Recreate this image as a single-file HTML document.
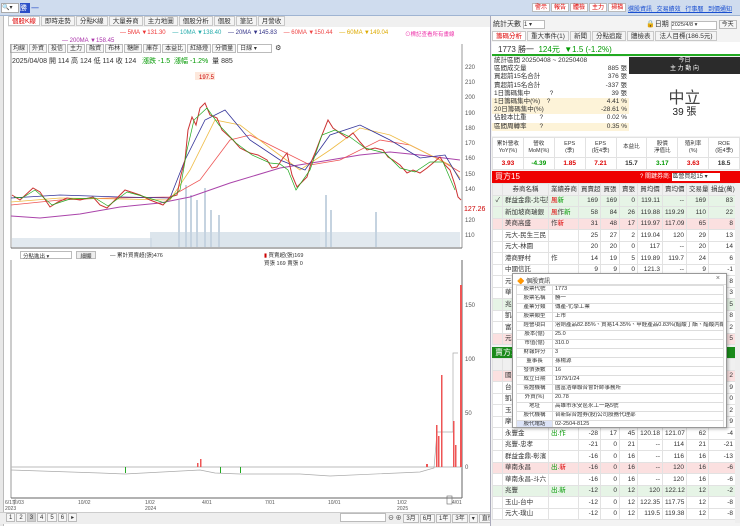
<!DOCTYPE html>
<html><head><meta charset="utf-8">
<style>
*{margin:0;padding:0;box-sizing:border-box}
body{width:740px;height:526px;overflow:hidden;background:#fff;font-family:"Liberation Sans","Noto Sans CJK TC",sans-serif;font-size:7px;color:#333;position:relative}
.a{position:absolute}
.tab{display:inline-block;border:1px solid #c8c8c8;background:#f4f4f4;padding:0 3px;height:10px;line-height:9px;margin-right:1px;font-size:6.5px}
.btn{display:inline-block;border:1px solid #bbb;background:#f6f6f6;padding:0 2px;height:9px;line-height:8px;font-size:6px;margin-right:1px}
table{border-collapse:collapse;width:100%;table-layout:fixed}
td{border:1px solid #e2e2e2;height:11.5px;line-height:9px;font-size:6.5px;padding:0 2px;text-align:right;white-space:nowrap;overflow:hidden}
td.l{text-align:left}
.r{color:#d00}.g{color:#090}
.pop td{height:9px;line-height:7.5px;font-size:5.5px;border:1px solid #ddd;text-align:left;padding:0 2px}
</style></head><body>
<div class="a" style="left:0;top:0;width:740px;height:16px;background:#cfdcee;border-bottom:1px solid #9fb4d2"></div>
<div class="a" style="left:1px;top:3px;width:18px;height:10px;background:#fff;border:1px solid #aaa;font-size:6px">🔍▾</div>
<div class="a" style="left:20px;top:3px;width:10px;height:10px;background:#2a4fc8;color:#fff;font-size:7px">勝</div>
<div class="a" style="left:31px;top:3px;font-size:8px;color:#2a4fc8">一</div>
<div class="a" style="left:532px;top:3px;font-size:6px">
<span class="btn r" style="background:#fff">警示</span><span class="btn r" style="background:#fff">報告</span><span class="btn r" style="background:#fff">體檢</span><span class="btn r" style="background:#fff">主力</span><span class="btn r" style="background:#fff">掃描</span></div>
<div class="a" style="left:628px;top:4px;font-size:6px;color:#1a4fd0;text-decoration:underline;word-spacing:3px">選股資訊 交易績效 行事曆 到價通知</div>
<div class="a" style="left:0;top:16px;width:4px;height:510px;background:#e8e8e8;border-right:1px solid #bbb"></div>
<div class="a" style="left:8px;top:16px;width:482px;height:11px;background:#f0f0f0">
<span class="tab r" style="background:#fff">個股K線</span><span class="tab">即時走勢</span><span class="tab">分點K線</span><span class="tab">大量券商</span><span class="tab">主力地圖</span><span class="tab">個股分析</span><span class="tab">個股</span><span class="tab">筆記</span><span class="tab">月營收</span></div>
<div class="a" style="left:120px;top:30px;font-size:6px;white-space:nowrap"><span style="color:#e33">— 5MA ▼131.30</span>&nbsp;&nbsp;&nbsp;&nbsp;<span style="color:#2aa">— 10MA ▼138.40</span>&nbsp;&nbsp;&nbsp;&nbsp;<span style="color:#338">— 20MA ▼145.83</span>&nbsp;&nbsp;&nbsp;&nbsp;<span style="color:#e44">— 60MA ▼150.44</span>&nbsp;&nbsp;&nbsp;&nbsp;<span style="color:#da0">— 60MA ▼149.04</span></div>
<div class="a" style="left:62px;top:38px;font-size:6px;color:#a3a"> — 200MA ▼158.45</div>
<div class="a" style="left:405px;top:30px;font-size:5.5px;color:#e3a">⊙標記查看所有畫線</div>
<div class="a" style="left:10px;top:44px;width:460px;height:10px">
<span class="btn">均線</span><span class="btn">外資</span><span class="btn">投信</span><span class="btn">主力</span><span class="btn">融資</span><span class="btn">布林</span><span class="btn">糖餅</span><span class="btn">庫存</span><span class="btn">本益比</span><span class="btn">紅綠燈</span><span class="btn">分價量</span><span class="btn" style="width:35px;background:#fff">日線 ▾</span> ⚙</div>
<div class="a" style="left:12px;top:56px;font-size:7px;white-space:nowrap">2025/04/08 開 114 高 124 低 114 收 124 &nbsp; <span class="g">漲跌 -1.5 &nbsp;漲幅 -1.2%</span> &nbsp;量 885</div>
<svg class="a" style="left:0;top:44px" width="490" height="205" viewBox="0 44 490 205">
<line x1="11" y1="44" x2="11" y2="248" stroke="#999"/>
<line x1="462" y1="44" x2="462" y2="248" stroke="#999"/>
<g font-size="6" fill="#555">
<text x="465" y="69">220</text><text x="465" y="84">210</text><text x="465" y="99">200</text><text x="465" y="115">190</text><text x="465" y="130">180</text><text x="465" y="145">170</text><text x="465" y="160">160</text><text x="465" y="176">150</text><text x="465" y="191">140</text><text x="465" y="222">120</text><text x="465" y="237">110</text></g>
<text x="464" y="211" font-size="7" fill="#c00">127.26</text>
<rect x="195" y="72" width="20" height="8" fill="#fde8dc"/><text x="199" y="79" font-size="6" fill="#c00">197.5</text>
<g fill="#c5d3e0">
<rect x="178" y="200" width="2" height="47"/><rect x="185" y="185" width="2" height="62"/><rect x="190" y="195" width="2" height="52"/><rect x="196" y="200" width="2" height="47"/><rect x="204" y="188" width="2" height="59"/><rect x="210" y="210" width="2" height="37"/><rect x="218" y="215" width="2" height="32"/><rect x="325" y="195" width="2" height="52"/><rect x="330" y="210" width="2" height="37"/><rect x="375" y="212" width="2" height="35"/>
<rect x="150" y="232" width="170" height="15" opacity=".6"/><rect x="320" y="232" width="140" height="15" opacity=".5"/><rect x="12" y="238" width="140" height="9" opacity=".5"/></g>
<path fill="none" stroke="#a4a" stroke-width="1" d="M11 216L40 218L80 214L120 207L160 203L190 197L230 183L280 168L330 160L360 155L390 152L420 155L460 160"/>
<path fill="none" stroke="#e55" stroke-width=".8" d="M11 205L60 200L110 198L170 197L200 180L230 140L250 135L280 150L310 165L340 160L380 140L410 145L440 160L460 172"/>
<path fill="none" stroke="#eb4" stroke-width=".8" d="M11 202L60 198L120 199L170 200L190 170L215 120L240 125L270 148L300 170L330 150L360 128L390 135L420 150L450 165L460 178"/>
<path fill="none" stroke="#339" stroke-width=".8" d="M11 198L60 195L120 197L170 198L185 160L205 120L225 110L250 140L280 160L305 170L330 135L360 125L390 140L420 158L445 155L460 180"/>
<path fill="none" stroke="#c33" stroke-width="1" d="M12 195L20 200L33 188L40 192L50 207L58 202L67 198L80 200L93 197L100 205L107 208L115 200L125 190L140 195L150 200L163 205L170 197L177 195L181 175L185 160L188 130L192 117L196 125L200 108L205 103L210 115L217 118L222 130L233 140L240 148L250 153L258 155L267 160L272 168L277 167L283 158L287 153L292 175L297 187L302 182L307 177L312 160L315 153L320 140L328 120L333 128L340 133L347 138L353 133L360 142L367 150L375 148L383 150L388 157L393 160L400 165L407 173L413 170L420 173L427 168L433 163L440 157L445 165L450 170L455 185L458 197L461 200"/>
<path fill="none" stroke="#2a2" stroke-width=".7" d="M14 197L22 198L35 190L52 205L70 199L95 198L108 206L127 192L142 196L165 203L180 190L187 150L194 120L207 108L219 125L236 143L252 155L270 163L280 164L288 170L296 190L310 170L322 135L335 130L350 137L365 148L385 153L400 168L415 172L430 162L443 162L455 190"/>
<line x1="11" y1="248" x2="462" y2="248" stroke="#666"/>
</svg>
<div class="a" style="left:20px;top:251px;width:52px;height:8px;border:1px solid #bbb;font-size:5.5px;padding-left:2px">分點進出 ▾</div>
<div class="a" style="left:76px;top:251px;width:20px;height:8px;border:1px solid #bbb;background:#eee;font-size:5.5px;text-align:center">細顯</div>
<div class="a" style="left:110px;top:251px;font-size:5.5px">— 累計買賣超(張)476</div>
<div class="a" style="left:264px;top:251px;font-size:5.5px"><span style="color:#c00">▮</span> 買賣超(張)169<br>買張 169 賣張 0</div>
<svg class="a" style="left:0;top:260px" width="490" height="250" viewBox="0 260 490 250">
<line x1="11" y1="260" x2="11" y2="498" stroke="#999"/>
<line x1="462" y1="260" x2="462" y2="498" stroke="#666"/>
<line x1="11" y1="498" x2="462" y2="498" stroke="#666"/>
<line x1="11" y1="467" x2="462" y2="467" stroke="#bbb"/>
<g font-size="6" fill="#555"><text x="465" y="307">150</text><text x="465" y="361">100</text><text x="465" y="415">50</text><text x="465" y="469">0</text></g>
<path fill="none" stroke="#aaa" stroke-width=".7" d="M11 470L100 473L125 474L200 470L215 473L240 474L300 474L330 476L420 472L434 468L437 432L453 432L453 353L458 353"/>
<g fill="#e55">
<rect x="436" y="425" width="1.5" height="42"/><rect x="438" y="436" width="1.5" height="31"/><rect x="441" y="375" width="1.5" height="92"/><rect x="453" y="421" width="1.5" height="46"/><rect x="455" y="445" width="1.5" height="22"/><rect x="460" y="285" width="2" height="182"/><rect x="426" y="464" width="2" height="3"/><rect x="200" y="459" width="1.5" height="8"/><rect x="197" y="463" width="1.5" height="4"/></g>
<g fill="#2a2"><rect x="125" y="467" width="1" height="6"/><rect x="220" y="467" width="1" height="6"/><rect x="240" y="467" width="1" height="6"/></g>
<g font-size="5" fill="#555"><text x="5" y="504">6/1季/03</text><text x="5" y="510">2023</text><text x="78" y="504">10/02</text><text x="145" y="504">1/02</text><text x="145" y="510">2024</text><text x="202" y="504">4/01</text><text x="265" y="504">7/01</text><text x="328" y="504">10/01</text><text x="397" y="504">1/02</text><text x="397" y="510">2025</text><text x="452" y="504">4/01</text></g>
<rect x="447" y="496" width="5" height="8" fill="none" stroke="#666" stroke-width=".6"/>
</svg>
<div class="a" style="left:0;top:512px;width:490px;height:12px;background:#eee;border-top:1px solid #ccc"></div>
<div class="a" style="left:6px;top:513px;font-size:6px"><span class="btn">1</span><span class="btn">2</span><span class="btn" style="background:#ccc">3</span><span class="btn">4</span><span class="btn">5</span><span class="btn">6</span><span class="btn">▸</span></div>
<div class="a" style="left:340px;top:513px;width:46px;height:9px;border:1px solid #bbb;background:#fff"></div>
<div class="a" style="left:388px;top:513px;font-size:6px;white-space:nowrap">⊖ ⊕ <span class="btn">3月</span><span class="btn">6月</span><span class="btn">1年</span><span class="btn">3年</span><span class="btn">▾</span><span class="btn">直慣</span></div>
<div class="a" style="left:490px;top:16px;width:250px;height:510px;background:#f3f3f3;border-left:1px solid #aab"></div>
<div class="a" style="left:493px;top:19px;font-size:7px">統計天數 <span style="display:inline-block;width:22px;height:9px;border:1px solid #bbb;background:#fff;font-size:6px">1 ▾</span></div>
<div class="a" style="left:646px;top:19px;font-size:7px;white-space:nowrap">🔒日期 <span style="display:inline-block;width:46px;height:9px;border:1px solid #bbb;background:#fff;font-size:5.5px">2025/4/8 ▾</span> <span class="btn">今天</span></div>
<div class="a" style="left:492px;top:31px;white-space:nowrap"><span class="tab r" style="background:#fff">籌碼分析</span><span class="tab">重大事件(1)</span><span class="tab">新聞</span><span class="tab">分點追蹤</span><span class="tab">體檢表</span><span class="tab">法人目標(186.5元)</span></div>
<div class="a" style="left:492px;top:42px;width:248px;height:14px;background:#fff;border-bottom:2px solid #2a2;font-size:8px;padding:2px 0 0 6px;white-space:nowrap">1773 勝一 &nbsp;<span class="g">124元 &nbsp;▼1.5 (-1.2%)</span></div>
<div class="a" style="left:492px;top:57px;width:137px;height:79px;background:#fff;font-size:6.5px;line-height:8.2px">
<div style="padding-left:2px">統計區間 20250408 ~ 20250408</div>
<div style="padding:0 2px;display:flex;justify-content:space-between"><span>區間成交量</span><span>885 張</span></div>
<div style="padding:0 2px;display:flex;justify-content:space-between"><span>買超前15名合計</span><span>376 張</span></div>
<div style="padding:0 2px;display:flex;justify-content:space-between"><span>賣超前15名合計</span><span>-337 張</span></div>
<div style="padding:0 2px;display:flex;justify-content:space-between"><span>1日籌碼集中　　　?</span><span>39 張</span></div>
<div style="padding:0 2px;display:flex;justify-content:space-between;background:#fdf3d8"><span>1日籌碼集中(%)　?</span><span>4.41 %</span></div>
<div style="padding:0 2px;display:flex;justify-content:space-between;background:#fdf3d8"><span>20日籌碼集中(%)</span><span>-28.61 %</span></div>
<div style="padding:0 2px;display:flex;justify-content:space-between"><span>佔股本比重　　?</span><span>0.02 %</span></div>
<div style="padding:0 2px;display:flex;justify-content:space-between;background:#fdf3d8"><span>區間周轉率　　?</span><span>0.35 %</span></div></div>
<div class="a" style="left:629px;top:57px;width:111px;height:79px;background:#fff"></div>
<div class="a" style="left:629px;top:57px;width:111px;height:17px;background:#2b2b2b;color:#fff;font-size:6px;text-align:center;line-height:8px">今日<br>主 力 動 向</div>
<div class="a" style="left:629px;top:84px;width:111px;text-align:center;font-size:16px;color:#444">中立</div>
<div class="a" style="left:629px;top:103px;width:111px;text-align:center;font-size:10px;color:#222">39 張</div>
<table class="a" style="left:492px;top:137px;width:248px;background:#fff">
<tr><td style="height:20px;text-align:center;font-size:5.5px;line-height:7px">累計營收<br>YoY(%)</td><td style="text-align:center;font-size:5.5px;line-height:7px">營收<br>MoM(%)</td><td style="text-align:center;font-size:5.5px;line-height:7px">EPS<br>(季)</td><td style="text-align:center;font-size:5.5px;line-height:7px">EPS<br>(近4季)</td><td style="text-align:center;font-size:5.5px">本益比</td><td style="text-align:center;font-size:5.5px;line-height:7px">股價<br>淨值比</td><td style="text-align:center;font-size:5.5px;line-height:7px">殖利率<br>(%)</td><td style="text-align:center;font-size:5.5px;line-height:7px">ROE<br>(近4季)</td></tr>
<tr><td style="text-align:center" class="r"><b>3.93</b></td><td style="text-align:center" class="g"><b>-4.39</b></td><td style="text-align:center" class="r"><b>1.85</b></td><td style="text-align:center" class="r"><b>7.21</b></td><td style="text-align:center"><b>15.7</b></td><td style="text-align:center" class="g"><b>3.17</b></td><td style="text-align:center" class="r"><b>3.63</b></td><td style="text-align:center"><b>18.5</b></td></tr></table>
<div class="a" style="left:492px;top:171px;width:248px;height:12px;background:#e00;color:#fff;font-size:8px;padding-left:3px;line-height:12px">買方15<span style="position:absolute;left:148px;font-size:6px">? 關鍵券商: <span style="display:inline-block;width:48px;height:8px;background:#fff;color:#333;line-height:8px">區營買超15 ▾</span></span></div>
<table class="a" style="left:492px;top:183px;width:243px;background:#fff">
<colgroup><col style="width:10px"><col style="width:46px"><col style="width:30px"><col style="width:22px"><col style="width:19px"><col style="width:18px"><col style="width:25px"><col style="width:24px"><col style="width:22px"><col style="width:27px"></colgroup>
<tr style="background:#f0f0f0"><td></td><td style="text-align:center">券商名稱</td><td style="text-align:center">業績券商</td><td style="text-align:center">買賣超</td><td style="text-align:center">買張</td><td style="text-align:center">賣張</td><td style="text-align:center">買均價</td><td style="text-align:center">賣均價</td><td style="text-align:center">交易量</td><td style="text-align:center">損益(萬)</td></tr>
<tr style="background:#e6f4e6"><td>✓</td><td class="l">群益金鼎-北屯證</td><td class="l"><span class="r">風</span><span class="g">新</span></td><td>169</td><td>169</td><td>0</td><td>119.11</td><td>--</td><td>169</td><td>83</td></tr>
<tr style="background:#e6f4e6"><td></td><td class="l">新加坡商瑞銀</td><td class="l"><span class="r">風</span>作<span class="g">新</span></td><td>58</td><td>84</td><td>26</td><td>119.88</td><td>119.29</td><td>110</td><td>22</td></tr>
<tr style="background:#fbe0e0"><td></td><td class="l">美商高盛</td><td class="l">作<span class="r">新</span></td><td>31</td><td>48</td><td>17</td><td>119.97</td><td>117.09</td><td>65</td><td>8</td></tr>
<tr><td></td><td class="l">元大-民生三民</td><td></td><td>25</td><td>27</td><td>2</td><td>119.04</td><td>120</td><td>29</td><td>13</td></tr>
<tr><td></td><td class="l">元大-林園</td><td></td><td>20</td><td>20</td><td>0</td><td>117</td><td>--</td><td>20</td><td>14</td></tr>
<tr><td></td><td class="l">港商野村</td><td class="l">作</td><td>14</td><td>19</td><td>5</td><td>119.89</td><td>119.7</td><td>24</td><td>6</td></tr>
<tr><td></td><td class="l">中國信託</td><td></td><td>9</td><td>9</td><td>0</td><td>121.3</td><td>--</td><td>9</td><td>-1</td></tr>
<tr><td></td><td class="l">元富</td><td></td><td></td><td></td><td></td><td></td><td></td><td></td><td>8</td></tr>
<tr><td></td><td class="l">華南</td><td></td><td></td><td></td><td></td><td></td><td></td><td></td><td>3</td></tr>
<tr style="background:#e6f4e6"><td></td><td class="l">兆豐</td><td></td><td></td><td></td><td></td><td></td><td></td><td></td><td>5</td></tr>
<tr><td></td><td class="l">凱基</td><td></td><td></td><td></td><td></td><td></td><td></td><td></td><td>8</td></tr>
<tr><td></td><td class="l">富邦</td><td></td><td></td><td></td><td></td><td></td><td></td><td></td><td>2</td></tr>
<tr style="background:#fbe0e0"><td></td><td class="l">元大</td><td></td><td></td><td></td><td></td><td></td><td></td><td></td><td>5</td></tr>
</table>
<div class="a" style="left:492px;top:347px;width:248px;height:11px;background:#1a8a1a;color:#fff;font-size:8px;padding-left:3px;line-height:11px">賣方15</div>
<table class="a" style="left:492px;top:358px;width:243px;background:#fff">
<colgroup><col style="width:10px"><col style="width:46px"><col style="width:30px"><col style="width:22px"><col style="width:19px"><col style="width:18px"><col style="width:25px"><col style="width:24px"><col style="width:22px"><col style="width:27px"></colgroup>
<tr style="background:#f0f0f0"><td></td><td></td><td></td><td></td><td></td><td></td><td></td><td></td><td></td><td></td></tr>
<tr style="background:#fbe0e0"><td></td><td class="l">國泰</td><td></td><td></td><td></td><td></td><td></td><td></td><td></td><td>2</td></tr>
<tr><td></td><td class="l">台新</td><td></td><td></td><td></td><td></td><td></td><td></td><td></td><td>9</td></tr>
<tr><td></td><td class="l">凱基</td><td></td><td></td><td></td><td></td><td></td><td></td><td></td><td>0</td></tr>
<tr><td></td><td class="l">玉山</td><td></td><td></td><td></td><td></td><td></td><td></td><td></td><td>2</td></tr>
<tr><td></td><td class="l">摩根</td><td></td><td></td><td></td><td></td><td></td><td></td><td></td><td>9</td></tr>
<tr><td></td><td class="l">永豐金</td><td class="l g">出.作</td><td>-28</td><td>17</td><td>45</td><td>120.18</td><td>121.07</td><td>62</td><td>-4</td></tr>
<tr><td></td><td class="l">兆豐-忠孝</td><td></td><td>-21</td><td>0</td><td>21</td><td>--</td><td>114</td><td>21</td><td>-21</td></tr>
<tr><td></td><td class="l">群益金鼎-彰濱</td><td></td><td>-16</td><td>0</td><td>16</td><td>--</td><td>116</td><td>16</td><td>-13</td></tr>
<tr style="background:#fbe0e0"><td></td><td class="l">華南永昌</td><td class="l g">出.<span class="r">新</span></td><td>-16</td><td>0</td><td>16</td><td>--</td><td>120</td><td>16</td><td>-6</td></tr>
<tr><td></td><td class="l">華南永昌-斗六</td><td></td><td>-16</td><td>0</td><td>16</td><td>--</td><td>120</td><td>16</td><td>-6</td></tr>
<tr style="background:#e6f4e6"><td></td><td class="l">兆豐</td><td class="l g">出.新</td><td>-12</td><td>0</td><td>12</td><td>120</td><td>122.12</td><td>12</td><td>-2</td></tr>
<tr><td></td><td class="l">玉山-台中</td><td></td><td>-12</td><td>0</td><td>12</td><td>122.35</td><td>117.75</td><td>12</td><td>-8</td></tr>
<tr><td></td><td class="l">元大-璞山</td><td></td><td>-12</td><td>0</td><td>12</td><td>119.5</td><td>119.38</td><td>12</td><td>-8</td></tr>
</table>
<div class="a" style="left:735px;top:183px;width:5px;height:340px;background:#eee"></div>
<div class="a pop" style="left:512px;top:273px;width:215px;height:155px;background:#fff;border:1px solid #999;box-shadow:1px 1px 3px rgba(0,0,0,.3);overflow:hidden">
<div style="height:11px;font-size:6px;padding:2px 0 0 4px;border-bottom:1px solid #ddd;position:relative">🔶 個股資訊<span style="position:absolute;right:6px;top:1px;font-size:7px;color:#666">×</span></div>
<table style="width:208px;margin-left:3px">
<colgroup><col style="width:36px"><col></colgroup>
<tr><td style="text-align:center">股票代號</td><td>1773</td></tr>
<tr><td style="text-align:center">股票名稱</td><td>勝一</td></tr>
<tr><td style="text-align:center">產業分類</td><td>傳產-化學工業</td></tr>
<tr><td style="text-align:center">股票類型</td><td>上市</td></tr>
<tr><td style="text-align:center">經營項目</td><td>溶劑產品82.85%、貿易14.35%、甲醛產品0.83%(醋酸丁酯、醋酸丙酯...</td></tr>
<tr><td style="text-align:center">股本(億)</td><td>25.0</td></tr>
<tr><td style="text-align:center">市值(億)</td><td>310.0</td></tr>
<tr><td style="text-align:center">財報評分</td><td>3</td></tr>
<tr><td style="text-align:center">董事長</td><td>孫楊源</td></tr>
<tr><td style="text-align:center">發債張數</td><td>16</td></tr>
<tr><td style="text-align:center">成立日期</td><td>1979/1/24</td></tr>
<tr><td style="text-align:center">簽證機構</td><td>國富浩華聯合會計師事務所</td></tr>
<tr><td style="text-align:center">外資(%)</td><td>20.78</td></tr>
<tr><td style="text-align:center">地址</td><td>高雄市永安區永工一路5號</td></tr>
<tr><td style="text-align:center">股代機構</td><td>台新綜合證券(股)公司股務代理部</td></tr>
<tr><td style="text-align:center;background:#dde4f8">股代電話</td><td>02-2504-8125</td></tr>
</table></div>
</body></html>
